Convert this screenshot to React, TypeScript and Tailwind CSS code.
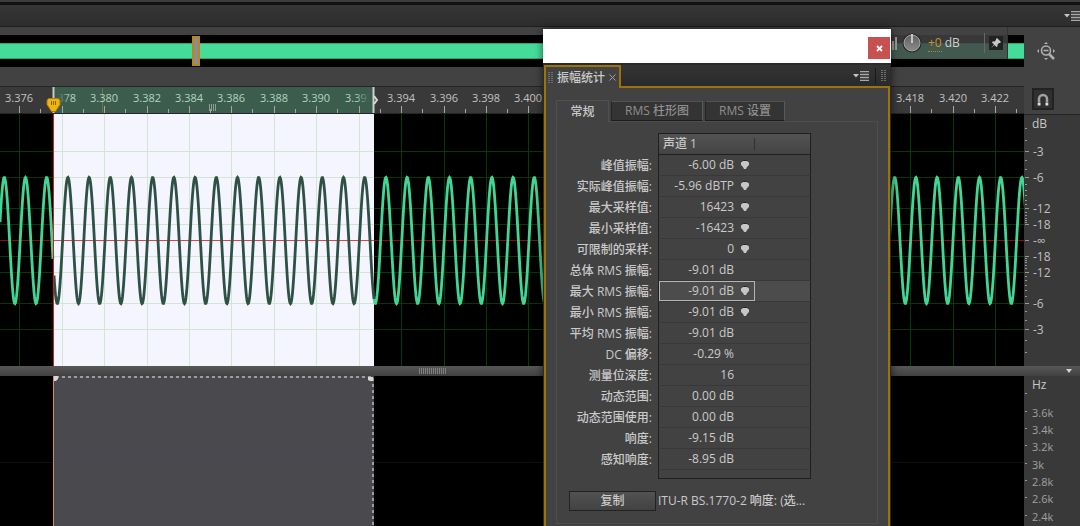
import { useEffect, useState } from "react";

interface Stat {
  label: string;
  value: string;
  marker?: boolean;
  selected?: boolean;
}

const stats: Stat[] = [
  { label: "峰值振幅:", value: "-6.00 dB", marker: true },
  { label: "实际峰值振幅:", value: "-5.96 dBTP", marker: true },
  { label: "最大采样值:", value: "16423", marker: true },
  { label: "最小采样值:", value: "-16423", marker: true },
  { label: "可限制的采样:", value: "0", marker: true },
  { label: "总体 RMS 振幅:", value: "-9.01 dB" },
  { label: "最大 RMS 振幅:", value: "-9.01 dB", marker: true, selected: true },
  { label: "最小 RMS 振幅:", value: "-9.01 dB", marker: true },
  { label: "平均 RMS 振幅:", value: "-9.01 dB" },
  { label: "DC 偏移:", value: "-0.29 %" },
  { label: "测量位深度:", value: "16" },
  { label: "动态范围:", value: "0.00 dB" },
  { label: "动态范围使用:", value: "0.00 dB" },
  { label: "响度:", value: "-9.15 dB" },
  { label: "感知响度:", value: "-8.95 dB" },
];

const SEL_START = 53;
const SEL_END = 374;
const CENTER = 126;
const AMPLITUDE = 63;
const PERIOD = 21.2;
const FIRST_PEAK = 4.3;
const MAX_WIDTH = 2600;
const SCALE_WIDTH = 56;
const GRID_STEP = 42.44;

// ruler seconds every 0.002, starting at 3.376
const makeGridLines = (width: number) =>
  Array.from(
    { length: Math.max(0, Math.floor((width - SCALE_WIDTH - 34) / GRID_STEP) + 1) },
    (_, i) => ({
      x: Math.round(19.2 + i * GRID_STEP),
      label: (3.376 + i * 0.002).toFixed(3),
    })
  );

type GridLine = ReturnType<typeof makeGridLines>[number];

const useGridLines = () => {
  const [width, setWidth] = useState(window.innerWidth);
  useEffect(() => {
    const onResize = () => setWidth(window.innerWidth);
    window.addEventListener("resize", onResize);
    return () => window.removeEventListener("resize", onResize);
  }, []);
  return makeGridLines(width);
};

const levelOffset = (db: number) => Math.round(126 * Math.pow(10, db / 20));
const gridLevels = [-3, -6, -12, -18];
const allLevels = Array.from({ length: 18 }, (_, i) => -(i + 1));

const hzLabels = [
  { text: "3.6k", y: 36 },
  { text: "3.4k", y: 53 },
  { text: "3.2k", y: 70 },
  { text: "3k", y: 88 },
  { text: "2.8k", y: 105 },
  { text: "2.6k", y: 122 },
  { text: "2.4k", y: 140 },
];

const wavePath = (from: number, to: number) => {
  const points: string[] = [];
  for (let x = from; x <= to; x += 0.5) {
    const y =
      CENTER + 0.5 - AMPLITUDE * Math.cos(((x - FIRST_PEAK) / PERIOD) * Math.PI * 2);
    points.push(`${x},${y.toFixed(1)}`);
  }
  return `M${points.join("L")}`;
};

const MenuIcon = () => (
  <svg width="16" height="10" viewBox="0 0 16 10" aria-hidden="true">
    <path d="M0 3h6L3 6.500z" fill="#c4c4c4" />
    <path
      d="M7 .5h9M7 3.500h9M7 6.500h9M7 9.500h9"
      stroke="#a8a8a8"
      strokeWidth="1.300"
    />
  </svg>
);

const Grip = () => (
  <svg width="5" height="12" viewBox="0 0 5 12" aria-hidden="true">
    <path
      d="M0 .5h2M3 .5h2M0 2.500h2M3 2.500h2M0 4.500h2M3 4.500h2M0 6.500h2M3 6.500h2M0 8.500h2M3 8.500h2M0 10.500h2M3 10.500h2"
      stroke="#6e6e6e"
    />
  </svg>
);

const MarkerIcon = () => (
  <svg width="8" height="10" viewBox="0 0 8 10" aria-hidden="true">
    <path d="M1 1.500Q4 -1 7 1.500" stroke="#242424" fill="none" />
    <path d="M2 1h4l2 1.500v2.500L6 7 5 9H3L2 7 0 5V2.500z" fill="#c6c6c6" />
  </svg>
);

const Overview = () => (
  <div className="relative h-8 flex-1 bg-black py-2">
    <div className="h-4 border-y border-[#2fa873] bg-[#45dc99]" />
    <button
      aria-label="缩放范围"
      className="absolute left-48 top-px h-[30px] w-2 border-2 border-[#b98714] bg-[#8f8a93]"
    />
    <div className="absolute -top-2 right-4 flex h-8 w-32 items-center border-r border-[#333] bg-[#424242]/85 pl-[6px]">
      <svg width="12" height="14" viewBox="0 0 12 14" aria-hidden="true">
        <path
          d="M1 14v-4M4 14V8M7 14V5M10 14V1"
          stroke="#9c9c9c"
          strokeWidth="2"
        />
      </svg>
      <svg
        className="ml-1"
        width="20"
        height="20"
        viewBox="0 0 20 20"
        aria-hidden="true"
      >
        <defs>
          <linearGradient id="knob" x1="0" y1="0" x2="0" y2="1">
            <stop offset="0" stopColor="#606060" />
            <stop offset="1" stopColor="#8c8c8c" />
          </linearGradient>
        </defs>
        <circle cx="10" cy="10" r="9.500" fill="#262626" />
        <circle cx="10" cy="10" r="8" fill="url(#knob)" stroke="#a2a2a2" />
        <path d="M10 1v9" stroke="#e4e4e4" strokeWidth="1.500" />
      </svg>
      <span className="ml-1.5 border-b border-dotted border-[#b08420] text-xs leading-4 text-[#c8942a]">
        +0
      </span>
      <span className="ml-[3px] text-xs leading-4 text-[#cfcfcf]">dB</span>
      <span className="ml-auto h-5 w-px bg-[#686868]" />
      <button
        aria-label="固定"
        className="ml-1 mr-1 flex h-[14px] w-[14px] shrink-0 items-center justify-center bg-[#222]"
      >
        <svg width="12" height="12" viewBox="0 0 12 12" aria-hidden="true">
          <path
            d="M7 1l4 4-1 1h-1L7.500 7.500v2L6.500 10 4.500 8 1 11l3-3.500L2 5.500l.5-1h2L6 3V2z"
            fill="#c8c8c8"
          />
        </svg>
      </button>
    </div>
  </div>
);

const Ruler = ({ lines }: { lines: GridLine[] }) => (
  <svg
    className="block h-7 min-w-0 flex-1 overflow-hidden bg-[#393939]"
    role="img"
    aria-label="时间标尺"
  >
    <defs>
      <linearGradient id="fadeLeft">
        <stop offset="0" stopColor="#3c5c4e" />
        <stop offset="0.3" stopColor="#3c5c4e" stopOpacity="0.9" />
        <stop offset="1" stopColor="#3c5c4e" stopOpacity="0" />
      </linearGradient>
      <linearGradient id="fadeRight">
        <stop offset="0" stopColor="#3c5c4e" stopOpacity="0" />
        <stop offset="1" stopColor="#3c5c4e" />
      </linearGradient>
    </defs>
    <rect
      x={SEL_START}
      y="1"
      width={SEL_END - SEL_START}
      height="27"
      fill="#3c5c4e"
    />
    <path d="M102.500 2v26" stroke="#68783a" />
    {lines.map(({ x, label }) => (
      <g key={label}>
        <text
          x={x}
          y="16"
          textAnchor="middle"
          className={
            x > SEL_START && x < SEL_END
              ? "fill-[#b0d6c2] text-[11px] font-medium"
              : "fill-[#c2c2c2] text-[11px] font-medium"
          }
        >
          {label}
        </text>
        <path d={`M${x + 0.5} 20v7M${x + 21.5} 23v4`} stroke="#a6a6a6" />
      </g>
    ))}
    <rect x="54" y="4" width="16" height="14" fill="url(#fadeLeft)" />
    <rect x="44" y="4" width="9" height="14" fill="#393939" />
    <rect x="356" y="4" width="14" height="14" fill="url(#fadeRight)" />
    <rect x="369" y="4" width="4" height="14" fill="#3c5c4e" />
    <path
      d="M209.500 18v7M211.500 18v7M213.500 18v7M215.500 18v7"
      stroke="#8e9d95"
    />
    <path d="M373.500 1v27" stroke="#cfcfcf" strokeWidth="2" />
    <path d="M374 10l3 4-3 4" stroke="#d8d8d8" strokeWidth="2" fill="none" />
    <path d="M53.500 1v27" stroke="#c9c9c9" strokeWidth="2" />
    <path
      d="M48.500 12.500h10l1.500 2v4l-4.500 7h-4l-4.500-7v-4z"
      fill="#eeb414"
      stroke="#a87a08"
    />
    <path d="M51.500 15v4M53.500 15v4M55.500 15v4" stroke="#8a6507" />
    <path d="M0 0.500h2600M0 27.500h2600" stroke="#252525" />
  </svg>
);

const Waveform = ({ lines }: { lines: GridLine[] }) => (
  <svg
    className="block h-[252px] min-w-0 flex-1 overflow-hidden bg-black"
    role="img"
    aria-label="波形"
  >
    <rect
      x={SEL_START}
      width={SEL_END - SEL_START}
      height="252"
      fill="#f4f5fe"
    />
    {lines.map(({ x }) => (
      <path
        key={x}
        d={`M${x + 0.5} 0v252`}
        stroke={x > SEL_START && x < SEL_END ? "#d3e6d5" : "#033a08"}
      />
    ))}
    {gridLevels.map((db) => {
      const top = CENTER - levelOffset(db) + 0.5;
      const bottom = CENTER + levelOffset(db) + 0.5;
      return (
        <g key={db}>
          <path
            d={`M0 ${top}h${MAX_WIDTH}M0 ${bottom}h${MAX_WIDTH}`}
            stroke="#033a08"
          />
          <path
            d={`M${SEL_START} ${top}H${SEL_END}M${SEL_START} ${bottom}H${SEL_END}`}
            stroke="#d0e6d1"
          />
        </g>
      );
    })}
    <path d="M0 126.500h2600" stroke="#8c0a0c" />
    <path d={`M${SEL_START} 126.500H${SEL_END}`} stroke="#d8434c" />
    <path
      d={wavePath(0, SEL_START)}
      stroke="#43d593"
      strokeWidth="2.800"
      fill="none"
    />
    <path
      d={wavePath(SEL_START + 1, SEL_END)}
      stroke="#2f5145"
      strokeWidth="2.800"
      fill="none"
    />
    <path
      d={wavePath(SEL_END, MAX_WIDTH)}
      stroke="#43d593"
      strokeWidth="2.800"
      fill="none"
    />
    <path d="M53.500 0v252" stroke="#d31c24" />
  </svg>
);

const DbScale = () => (
  <svg
    className="block h-[252px] w-14 shrink-0 bg-[#393939]"
    role="img"
    aria-label="振幅标尺"
  >
    <path d="M0 .5h56" stroke="#252525" />
    <text x="8" y="14" className="fill-[#c8c8c8] text-xs font-medium">
      dB
    </text>
    {allLevels.map((db) => {
      const w = gridLevels.includes(db) ? 4 : 2;
      return (
        <path
          key={db}
          d={`M1 ${CENTER - levelOffset(db) + 0.5}h${w}M1 ${
            CENTER + levelOffset(db) + 0.5
          }h${w}`}
          stroke="#999"
        />
      );
    })}
    <path d="M1 126.500h4" stroke="#999" />
    {gridLevels.map((db) => (
      <g key={db} className="fill-[#c0c0c0] text-xs font-medium">
        <text x="9" y={CENTER - levelOffset(db) + 5}>
          {db}
        </text>
        <text x="9" y={CENTER + levelOffset(db) + 5}>
          {db}
        </text>
      </g>
    ))}
    <text x="9" y="131" className="fill-[#c0c0c0] text-xs font-medium">
      -∞
    </text>
  </svg>
);

const Spectral = () => (
  <svg
    className="block min-w-0 flex-1 overflow-hidden bg-black"
    role="img"
    aria-label="频谱"
  >
    <rect
      x={SEL_START}
      width={SEL_END - SEL_START}
      height="100%"
      fill="#4a494e"
    />
    <path d="M0 86.500h2600" stroke="#505070" strokeOpacity="0.18" />
    <path
      d="M56 1h318"
      stroke="#b9b9bd"
      strokeWidth="1.500"
      strokeDasharray="3 3"
    />
    <path
      d="M373 2v2000"
      stroke="#b9b9bd"
      strokeWidth="1.500"
      strokeDasharray="3 3"
    />
    <path d="M54 0h4v3l-2 2h-2zM368 1h5v4h-3l-2-1z" fill="#d6d6da" />
    <path d="M53.500 0v2000" stroke="#d98080" />
  </svg>
);

const HzScale = () => (
  <svg
    className="block w-14 shrink-0 bg-[#393939]"
    role="img"
    aria-label="频率标尺"
  >
    <text x="8" y="13" className="fill-[#c8c8c8] text-xs font-medium">
      Hz
    </text>
    <path d="M1 17.500h2" stroke="#999" />
    {hzLabels.map(({ text, y }) => (
      <g key={text}>
        <path d={`M1 ${y - 0.5}h2`} stroke="#999" />
        <text x="8" y={y + 5} className="fill-[#a0a0a0] text-[11px] font-medium">
          {text}
        </text>
      </g>
    ))}
  </svg>
);

const Splitter = () => (
  <div className="flex h-[10px] bg-gradient-to-b from-[#575757] to-[#414141]">
    <svg className="block h-full min-w-0 flex-1" aria-hidden="true">
      {Array.from({ length: 14 }, (_, i) => (
        <path key={i} d={`M${419.5 + i * 2} 2v6`} stroke="#808080" />
      ))}
    </svg>
    <svg className="block h-full w-14" aria-hidden="true">
      <path d="M42 3h6l-3 4z" fill="#d2d2d2" />
    </svg>
  </div>
);

const StatsTable = () => (
  <table className="border-separate border-spacing-0 text-right">
    <thead>
      <tr className="h-[22px]">
        <td className="w-[101px] p-0" />
        <th
          colSpan={2}
          scope="col"
          className="border border-[#1f1f1f] bg-gradient-to-b from-[#535353] to-[#444] p-0 text-left font-medium"
        >
          <div className="flex items-center">
            <span className="w-[95px] pl-1 leading-5">声道 1</span>
            <span className="h-3 w-px bg-[#303030]" />
          </div>
        </th>
      </tr>
    </thead>
    <tbody>
      {stats.map(({ label, value, marker, selected }) => (
        <tr key={label} className="h-[21px]">
          <th
            scope="row"
            className="whitespace-nowrap p-0 pr-[6px] font-medium leading-5"
          >
            {label}
          </th>
          <td
            className={`w-[97px] border-b border-l border-b-[#383838] border-l-[#1f1f1f] p-0 ${
              selected ? "bg-[#4c4c4c]" : ""
            }`}
          >
            <div
              className={`flex h-5 items-center justify-end border pr-[5px] ${
                selected ? "border-[#b4b4b4]" : "border-transparent"
              }`}
            >
              <span>{value}</span>
              <span className="ml-[7px] w-2">
                {marker && (
                  <button aria-label={`转到 ${label}`} className="block">
                    <MarkerIcon />
                  </button>
                )}
              </span>
            </div>
          </td>
          <td
            className={`w-[56px] border-b border-r border-b-[#383838] border-r-[#1f1f1f] p-0 ${
              selected ? "bg-[#4c4c4c]" : ""
            }`}
          />
        </tr>
      ))}
      <tr className="h-[9px]">
        <td className="p-0" />
        <td colSpan={2} className="border border-t-0 border-[#1f1f1f] p-0" />
      </tr>
    </tbody>
  </table>
);

const StatsWindow = () => (
  <section
    aria-label="振幅统计"
    className="absolute bottom-0 left-[543px] top-[29px] flex w-[348px] flex-col overflow-hidden bg-[#2b2b2b] text-xs font-medium text-[#cacaca] shadow-[0_0_8px_rgba(0,0,0,0.6)]"
  >
    <header className="flex h-[34px] shrink-0 items-end justify-end bg-white pb-1 pr-px">
      <button
        aria-label="关闭"
        className="flex h-[22px] w-[22px] items-center justify-center bg-[#c75050]"
      >
        <svg width="7" height="7" viewBox="0 0 7 7" aria-hidden="true">
          <path d="M1 1l5 5M6 1L1 6" stroke="#fff" strokeWidth="1.800" />
        </svg>
      </button>
    </header>
    <div className="mt-[2px] flex h-[21px] shrink-0 px-px">
      <div className="relative z-10 -mb-[2px] flex w-[77px] items-center border-r-2 border-t-2 border-l-2 border-[#9a730c] bg-[#424242] pl-[2px]">
        <Grip />
        <span className="ml-1 whitespace-nowrap">振幅统计</span>
        <button aria-label="关闭标签" className="ml-[4px]">
          <svg width="7" height="7" viewBox="0 0 7 7" aria-hidden="true">
            <path d="M.5 .5l6 6M6.500 .5l-6 6" stroke="#a0a0a0" fill="none" />
          </svg>
        </button>
      </div>
      <div className="flex flex-1 items-center justify-end bg-gradient-to-b from-[#343434] to-[#2a2a2a] pr-1">
        <button aria-label="面板菜单">
          <MenuIcon />
        </button>
        <span className="ml-[6px] mr-[5px] h-4 w-px bg-[#191919]" />
        <Grip />
      </div>
    </div>
    <div className="mx-px flex flex-1 flex-col border-x-2 border-t-2 border-[#9a730c] bg-[#424242] px-[10px] pt-3">
      <div role="tablist" className="flex h-[21px] items-end gap-[2px]">
        <button
          role="tab"
          aria-selected="true"
          className="relative z-10 -mb-px h-[22px] w-[53px] border border-b-0 border-[#505050] bg-[#424242]"
        >
          常规
        </button>
        <button
          role="tab"
          aria-selected="false"
          className="h-5 w-[92px] border border-b-[#1d1d1d] border-l-[#242424] border-r-[#5a5a5a] border-t-[#525252] bg-[#343434] text-[#8f8f8f]"
        >
          RMS 柱形图
        </button>
        <button
          role="tab"
          aria-selected="false"
          className="h-5 w-[80px] border border-b-[#1d1d1d] border-l-[#242424] border-r-[#5a5a5a] border-t-[#525252] bg-[#343434] text-[#8f8f8f]"
        >
          RMS 设置
        </button>
      </div>
      <div className="border border-[#4d4d4d] pb-3 pt-[11px]">
        <StatsTable />
        <div className="mt-3 flex items-center pl-3">
          <button className="h-5 w-[87px] border border-[#222] bg-gradient-to-b from-[#525252] to-[#424242]">
            复制
          </button>
          <span className="ml-[2px] whitespace-nowrap">
            ITU-R BS.1770-2 响度: (选...
          </span>
        </div>
      </div>
    </div>
  </section>
);

const App = () => {
  const lines = useGridLines();

  return (
    <main className="relative flex min-h-screen flex-col overflow-hidden bg-[#424242] font-['Open_Sans','Noto_Sans_CJK_SC',sans-serif]">
      <div className="h-[5px] border-b-[3px] border-[#121212] bg-[#3c3c3c]" />
      <div className="flex h-[22px] items-center justify-end border-b border-[#202020] bg-gradient-to-b from-[#363636] to-[#2d2d2d]">
        <button aria-label="菜单">
          <MenuIcon />
        </button>
      </div>

      {/* overview strip */}
      <div className="flex pb-[19px] pt-2">
        <Overview />
        <div className="flex w-14 shrink-0 items-center justify-center pr-3">
          <button aria-label="全部缩小">
            <svg width="18" height="18" viewBox="0 0 18 18" aria-hidden="true">
              <circle
                cx="9"
                cy="8.500"
                r="4.500"
                stroke="#b0b0b0"
                strokeWidth="1.500"
                fill="none"
              />
              <path d="M6.500 8.500h5" stroke="#b0b0b0" strokeWidth="1.500" />
              <path d="M12 12l5 5" stroke="#b0b0b0" strokeWidth="2.500" />
              <path
                d="M9 0l2 2H7zM9 18l-2-2h4zM0 9l2-2v4zM18 9l-2-2v4z"
                fill="#b0b0b0"
              />
            </svg>
          </button>
        </div>
      </div>

      <div className="flex">
        <Ruler lines={lines} />
        <div className="w-14 shrink-0 pl-2 pt-[2px]">
          <button
            aria-label="对齐"
            className="flex h-[22px] w-[22px] items-center justify-center border-2 border-[#222] bg-[#303030]"
          >
            <svg width="12" height="13" viewBox="0 0 12 13" aria-hidden="true">
              <path
                d="M2 9V6a4 4 0 0 1 8 0v3"
                stroke="#a2a2a2"
                strokeWidth="2.500"
                fill="none"
              />
              <path
                d="M.7 9.500h2.800v3H.7zM8.500 9.500h2.800v3H8.500z"
                fill="#e0e0e0"
              />
            </svg>
          </button>
        </div>
      </div>

      <div className="flex">
        <Waveform lines={lines} />
        <DbScale />
      </div>
      <Splitter />
      <div className="flex min-h-[150px] flex-1">
        <Spectral />
        <HzScale />
      </div>

      <StatsWindow />
    </main>
  );
};

export default App;
